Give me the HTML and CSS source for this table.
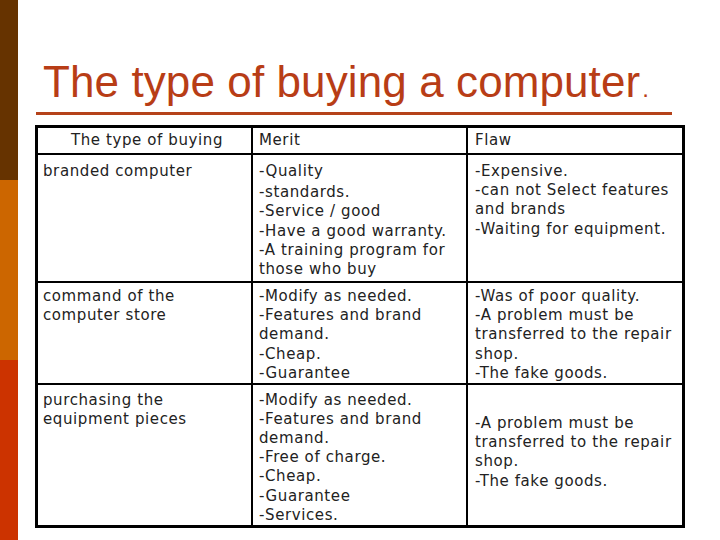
FILE: index.html
```html
<!DOCTYPE html>
<html>
<head>
<meta charset="utf-8">
<link rel="stylesheet" href="styles.css">
</head>
<body>
<div class="slide">
  <div class="bar">
    <div class="seg seg-brown"></div>
    <div class="seg seg-orange"></div>
    <div class="seg seg-red"></div>
  </div>
  <div class="content">
    <h1 class="title">The type of buying a computer<span class="dot">.</span></h1>
    <div class="rule"></div>
    <table class="grid">
      <colgroup>
        <col class="c1"><col class="c2"><col class="c3">
      </colgroup>
      <tr class="head">
        <td class="center">The type of buying</td>
        <td>Merit</td>
        <td class="last">Flaw</td>
      </tr>
      <tr class="r1">
        <td>branded computer</td>
        <td>-Quality<div class="gap">-standards.</div>-Service / good<br>-Have a good warranty.<br>-A training program for<br>those who buy</td>
        <td class="last">-Expensive.<br>-can not Select features<br>and brands<br>-Waiting for equipment.</td>
      </tr>
      <tr class="r2">
        <td>command of the<br>computer store</td>
        <td>-Modify as needed.<br>-Features and brand<br>demand.<br>-Cheap.<br>-Guarantee</td>
        <td class="last">-Was of poor quality.<br>-A problem must be<br>transferred to the repair<br>shop.<br>-The fake goods.</td>
      </tr>
      <tr class="r3">
        <td>purchasing the<br>equipment pieces</td>
        <td>-Modify as needed.<br>-Features and brand<br>demand.<br>-Free of charge.<br>-Cheap.<br>-Guarantee<br>-Services.</td>
        <td class="last lower">-A problem must be<br>transferred to the repair<br>shop.<br>-The fake goods.</td>
      </tr>
    </table>
  </div>
</div>
</body>
</html>
```
FILE: styles.css
```css
html, body {
  margin: 0;
  padding: 0;
  background: #ffffff;
}

.slide {
  display: flex;
  width: 720px;
  height: 540px;
  overflow: hidden;
}

.bar {
  width: 18px;
  display: flex;
  flex-direction: column;
  flex-shrink: 0;
}

.seg {
  height: 180px;
}

.seg-brown { background: #663300; }
.seg-orange { background: #cc6600; }
.seg-red { background: #cc3300; }

.content {
  padding-left: 17px;
  padding-top: 60px;
}

.title {
  margin: 0 0 8px 0;
  padding-left: 8px;
  font-family: "Liberation Sans", Arial, sans-serif;
  font-weight: normal;
  font-size: 44px;
  line-height: 44px;
  height: 44px;
  color: #b83d16;
  white-space: nowrap;
  letter-spacing: 0.1px;
}

.dot {
  font-size: 24px;
  margin-left: 2px;
}

.rule {
  width: 636px;
  height: 3px;
  margin-left: 1px;
  background: #b5421a;
  margin-bottom: 10px;
}

.grid {
  border-collapse: separate;
  border-spacing: 0;
  border: 3px solid #000;
  width: 650px;
  table-layout: fixed;
  font-family: "DejaVu Sans", Verdana, sans-serif;
  font-size: 15px;
  letter-spacing: 0.6px;
  line-height: 19.2px;
  color: #222;
}

.c1 { width: 215px; }
.c2 { width: 215px; }
.c3 { width: 214px; }

.grid td {
  vertical-align: top;
  padding: 0 0 0 6px;
  border-right: 2px solid #000;
  border-bottom: 2px solid #000;
  white-space: nowrap;
  overflow: hidden;
}

.grid td:first-child {
  padding-left: 5px;
}

.grid td.last {
  border-right: none;
  padding-left: 7px;
}

.grid tr.r3 td {
  border-bottom: none;
}

.grid td.center {
  text-align: center;
}

.head td {
  height: 27px;
  padding-top: 3px;
  box-sizing: border-box;
}

.r1 td {
  height: 128px;
  box-sizing: border-box;
  padding-top: 7px;
}

.r2 td {
  height: 102px;
  box-sizing: border-box;
  padding-top: 4px;
}

.r3 td {
  height: 140px;
  box-sizing: border-box;
  padding-top: 5.5px;
}

.r3 td.lower {
  padding-top: 29px;
}

.gap {
  margin-top: 2px;
}
```
